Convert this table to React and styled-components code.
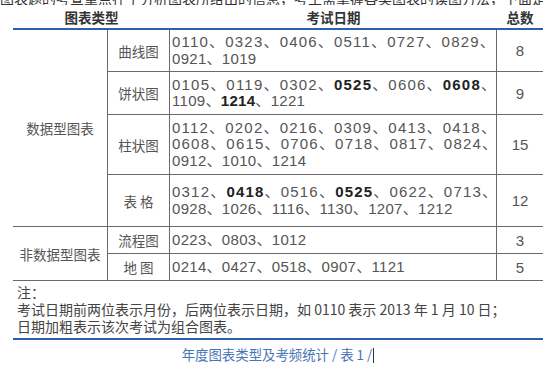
import React from 'react';
import styled, { createGlobalStyle } from 'styled-components';

////////////////////////////////////////////////////
////////////////////// DATA ////////////////////////
////////////////////////////////////////////////////

// '*' wraps the dates printed in bold (combined-chart exams)
const groups = [
   {
      name: '数据型图表',
      rows: [
         { type: '曲线图', h: 42, total: 8, lines: ['0110、0323、0406、0511、0727、0829、', '0921、1019'] },
         { type: '饼状图', h: 43, total: 9, lines: ['0105、0119、0302、*0525*、0606、*0608*、', '1109、*1214*、1221'] },
         {
            type: '柱状图', h: 60, total: 15,
            lines: ['0112、0202、0216、0309、0413、0418、', '0608、0615、0706、0718、0817、0824、', '0912、1010、1214'],
         },
         { type: '表 格', h: 52, total: 12, lines: ['0312、*0418*、0516、*0525*、0622、0713、', '0928、1026、1116、1130、1207、1212'] },
      ],
   },
   {
      name: '非数据型图表',
      rows: [
         { type: '流程图', h: 27, total: 3, lines: ['0223、0803、1012'] },
         { type: '地 图', h: 27, total: 5, lines: ['0214、0427、0518、0907、1121'] },
      ],
   },
];

const allRows = groups.flatMap((g) => g.rows);

////////////////////////////////////////////////////
//////////////////// COMPONENT /////////////////////
////////////////////////////////////////////////////

function DateLine({ text, full }) {
   const parts = text.split('*');
   return (
      <Line $full={full}>
         {parts.map((p, i) => (i % 2 ? <b key={i}>{p}</b> : <span key={i}>{p}</span>))}
      </Line>
   );
}

export default function App() {
   let rowIndex = 1;
   return (
      <Page>
         <GlobalStyle />
         <CutLine>
            <span>图表题的考查重点在于分析图表所给出的信息，考生需掌握各类图表的读图方法，下面是近年来各类图表考查的频次统计</span>
         </CutLine>
         <Header>
            <HeadCell $span={2}>图表类型</HeadCell>
            <HeadCell>考试日期</HeadCell>
            <HeadCell>总数</HeadCell>
         </Header>
         <Table $rows={allRows.map((r) => r.h + 'px').join(' ')}>
            {groups.map((g) => {
               const start = rowIndex;
               rowIndex += g.rows.length;
               return (
                  <React.Fragment key={g.name}>
                     <GroupCell $start={start} $span={g.rows.length}>{g.name}</GroupCell>
                     {g.rows.map((r) => (
                        <React.Fragment key={r.type}>
                           <TypeCell>{r.type}</TypeCell>
                           <DateCell>
                              {r.lines.map((l, i) => (
                                 <DateLine key={i} text={l} full={i < r.lines.length - 1} />
                              ))}
                           </DateCell>
                           <TotalCell>{r.total}</TotalCell>
                        </React.Fragment>
                     ))}
                  </React.Fragment>
               );
            })}
         </Table>
         <Notes>
            <p>注：</p>
            <p>考试日期前两位表示月份，后两位表示日期，如 0110 表示 2013 年 1 月 10 日；</p>
            <p>日期加粗表示该次考试为组合图表。</p>
         </Notes>
         <Caption>
            年度图表类型及考频统计 / 表 1 /<Cursor />
         </Caption>
      </Page>
   );
}

////////////////////////////////////////////////////
//////////////// STYLED COMPONENTS /////////////////
////////////////////////////////////////////////////

const GlobalStyle = createGlobalStyle`
   html, body {
      margin: 0;
      background: #fff;
   }
   body {
      font-family: "Liberation Sans", "Noto Sans CJK SC", sans-serif;
   }
`;

const COLS = '95px 62px 327px 46px';
const LINE = '#6a6a6a';
const BLUE = '#2c5fae';

const Page = styled.div`
   width: 550px;
   height: 367px;
   overflow: hidden;
   box-sizing: border-box;
   padding: 0 7px 0 13px;
`;

const CutLine = styled.div`
   height: 5px;
   margin-left: -13px;
   margin-bottom: 1px;
   overflow: hidden;
   white-space: nowrap;
   font-family: "Noto Sans CJK SC", sans-serif;
   font-size: 14px;
   line-height: 14px;
   color: #333;
   span {
      display: block;
      margin-top: -9px;
   }
`;

const Header = styled.div`
   display: grid;
   grid-template-columns: ${COLS};
   height: 22px;
   border-bottom: 2px solid ${BLUE};
`;

const HeadCell = styled.div`
   grid-column: span ${({ $span }) => $span || 1};
   display: flex;
   align-items: center;
   justify-content: center;
   font-family: "Noto Sans CJK SC", sans-serif;
   font-weight: 700;
   font-size: 13.5px;
   color: #333;
`;

const Table = styled.div`
   display: grid;
   grid-template-columns: ${COLS};
   grid-template-rows: ${({ $rows }) => $rows};
   color: #555;
   > div {
      box-sizing: border-box;
      border-bottom: 1px solid ${LINE};
   }
`;

const GroupCell = styled.div`
   grid-column: 1;
   grid-row: ${({ $start }) => $start} / span ${({ $span }) => $span};
   border-right: 1px solid ${LINE};
   display: flex;
   align-items: center;
   justify-content: center;
   font-family: "Noto Sans CJK SC", sans-serif;
   font-size: 13.5px;
`;

const TypeCell = styled.div`
   grid-column: 2;
   border-right: 1px solid ${LINE};
   display: flex;
   align-items: center;
   justify-content: center;
   font-family: "Noto Sans CJK SC", sans-serif;
   font-size: 13.5px;
   white-space: pre;
`;

const DateCell = styled.div`
   grid-column: 3;
   border-right: 1px solid ${LINE};
   display: flex;
   flex-direction: column;
   justify-content: center;
   padding-left: 2px;
   font-size: 15px;
   line-height: 16.5px;
   b {
      color: #222;
   }
`;

const Line = styled.div`
   white-space: nowrap;
   letter-spacing: ${({ $full }) => ($full ? '1.2px' : '0.3px')};
`;

const TotalCell = styled.div`
   grid-column: 4;
   display: flex;
   align-items: center;
   justify-content: center;
   font-size: 15px;
`;

const Notes = styled.div`
   padding: 3px 0 3px 4px;
   border-bottom: 2px solid ${BLUE};
   font-family: "Noto Sans CJK SC", sans-serif;
   font-size: 14px;
   line-height: 17px;
   color: #444;
   p {
      margin: 0;
   }
`;

const Caption = styled.div`
   padding-top: 6px;
   text-align: center;
   font-family: "Noto Sans CJK SC", sans-serif;
   font-size: 13.4px;
   line-height: 16px;
   color: #4a74b8;
`;

const Cursor = styled.span`
   display: inline-block;
   width: 0;
   height: 15px;
   margin-left: 1px;
   vertical-align: -3px;
   border-left: 1.5px solid #333;
`;
